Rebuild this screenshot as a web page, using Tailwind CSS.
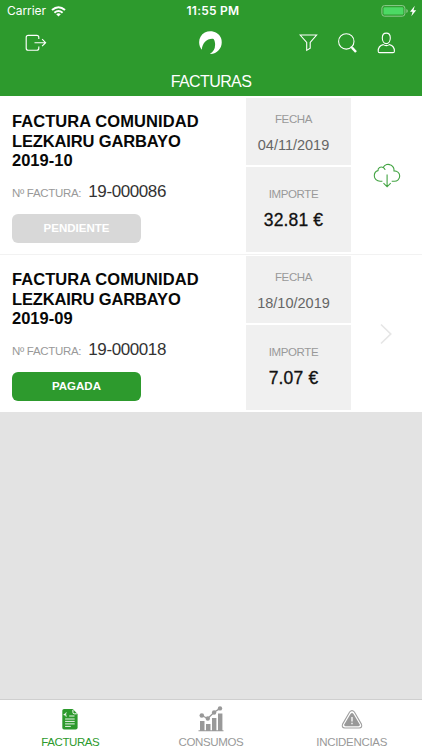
<!DOCTYPE html>
<html lang="es">
<head>
<meta charset="utf-8">
<title>Facturas</title>
<script src="https://cdn.jsdelivr.net/npm/@tailwindcss/browser@4"></script>
</head>
<body class="w-[422px] h-[750px] overflow-hidden bg-[#e3e3e3] font-['Liberation_Sans',Arial,sans-serif] flex flex-col whitespace-nowrap">
<header class="h-24 shrink-0 bg-[#2d9a2d] text-white flex flex-col">
  <div class="h-[22px] grid grid-cols-3 items-center pl-[7px] pr-[5px] font-[Inter,sans-serif]">
    <div class="flex items-center gap-[5px] text-[12px] leading-[22px]"><span class="tracking-[-0.05px]">Carrier</span>
      <svg class="w-[15px] h-[11px]" viewBox="0 0 15 11" fill="none" stroke="white" stroke-width="2"><path d="M1 4.1Q7.5-1.7 14 4.1M3.4 6.7Q7.5 3.2 11.6 6.7"/><path d="M5.2 8.2Q7.5 6.5 9.8 8.2L7.5 10.6Z" fill="white" stroke="none"/></svg>
    </div>
    <div class="text-center text-[12px] leading-[22px] font-semibold tracking-[0.25px] pl-[2px]">11:55 PM</div>
    <div class="flex justify-end items-center">
      <svg class="w-[38px] h-[12px]" viewBox="0 0 38 12"><rect x="2.9" y=".6" width="23" height="10.6" rx="2.6" fill="none" stroke="#8fca8f" stroke-width="1"/><rect x="4.5" y="2.2" width="19.9" height="7.4" rx="1.2" fill="#4cd964"/><path d="M27.4 4v4q1.4-.6 1.4-2t-1.4-2" fill="#8fca8f"/><path d="M35.8.8l-4.8 5.9h2.6l-1.3 4.5 4.9-6h-2.7z" fill="white"/></svg>
    </div>
  </div>
  <div class="h-[42px] grid grid-cols-3 items-center">
    <svg class="w-[22px] h-[18px] ml-[25px]" viewBox="0 0 22 18" fill="none" stroke="white" stroke-width="1.15"><path d="M13.8 5V3.3Q13.8 1.3 11.8 1.3H3.2Q1.2 1.3 1.2 3.3V14.2Q1.2 16.2 3.2 16.2H11.8Q13.8 16.2 13.8 14.2V12.5M9.5 8.7H20.5M17.1 5.2L20.6 8.7L17.1 12.2"/></svg>
    <svg class="w-[24px] h-[24px] justify-self-center" viewBox="0 0 24 24"><path d="M2.8 18.8C-1.6 13.5-.5 4.8 5.8 1.5C12.2-1.3 19.5 1.2 22 7C24.7 14.5 19.8 23.2 10.9 22.9Q16.8 19.2 16 12Q15.8 9.2 14.6 7.9C8.5 7 3.4 11.5 2.8 18.8Z" fill="white"/></svg>
    <div class="flex items-center pl-[18px] gap-[19.5px]">
      <svg class="w-[19px] h-[20px]" viewBox="0 0 19 20" fill="none" stroke="white" stroke-width="1.1"><path d="M1.1 2H17.6L11.2 9.4V15.3L7.7 17.4V9.4Z"/></svg>
      <svg class="w-[20px] h-[22px]" viewBox="0 0 20 22" fill="none" stroke="white"><circle cx="8.3" cy="9.4" r="7.7" stroke-width="1.05"/><path d="M12.8 14.6L14.5 15.9" stroke-width="1.2"/><path d="M14 15.6L18 20" stroke-width="2.4"/></svg>
      <svg class="w-[19px] h-[22px]" viewBox="0 0 19 22" fill="none" stroke="white" stroke-width="1.1"><path d="M9.3 1.1C6.5 1.1 5.3 3 5.3 6C5.3 9 7 11.6 9.3 11.6C11.6 11.6 13.3 9 13.3 6C13.3 3 12.1 1.1 9.3 1.1Z"/><path d="M6.2 12.6Q1 14 1.2 19.2Q1.2 20.6 2.6 20.6H16Q17.4 20.6 17.4 19.2Q17.6 14 12.4 12.6Q9.3 14.6 6.2 12.6Z"/></svg>
    </div>
  </div>
  <h1 class="h-8 text-center text-[16px] leading-[35px] tracking-[-0.6px]">FACTURAS</h1>
</header>

<main class="grow">
  <article class="h-[158px] bg-white flex">
    <div class="w-[246px] pl-[12px] pt-[16px]">
      <h2 class="text-[16.5px] leading-[19.5px] font-bold text-[#080808]"><span class="tracking-[0.07px]">FACTURA COMUNIDAD</span><br><span class="tracking-[-0.14px]">LEZKAIRU GARBAYO</span><br>2019-10</h2>
      <p class="mt-[11px] h-[20px] leading-[20px] flex items-baseline gap-[7px]"><span class="text-[11.5px] text-[#999] tracking-[-0.3px]">Nº FACTURA:</span><span class="text-[17px] text-[#333] tracking-[-0.4px]">19-000086</span></p>
      <div class="mt-[12px] w-[129px] h-[29px] rounded-[6px] bg-[#d8d8d8] text-white text-[11.5px] leading-[29px] font-bold text-center">PENDIENTE</div>
    </div>
    <div class="w-[105px] pt-[2px] flex flex-col gap-[2px] text-center">
      <div class="h-[67px] bg-[#f0f0f0] pt-[13px] pr-[10px]"><div class="text-[11.5px] leading-[16px] text-[#999] tracking-[-0.4px]">FECHA</div><div class="mt-[8px] text-[14.5px] leading-[20px] text-[#666]">04/11/2019</div></div>
      <div class="h-[85px] bg-[#f0f0f0] pt-[19px] pr-[10px]"><div class="text-[11.5px] leading-[16px] text-[#999] tracking-[-0.35px]">IMPORTE</div><div class="mt-[8px] text-[17.5px] leading-[20px] text-[#111] tracking-[0.15px] [-webkit-text-stroke:0.3px_#111]">32.81 €</div></div>
    </div>
    <div class="w-[71px] flex items-center justify-center">
      <svg class="w-[28px] h-[26px] relative top-[1px]" viewBox="0 0 28 26" fill="none" stroke="#43a443" stroke-width="1.1"><path d="M9.4 18.3H7.1C3.8 18.3 1.3 15.9 1.3 12.8C1.3 10.1 2.7 8.1 5 7.6C4.8 4.6 7.8 3.2 10.2 4.6C11.7 1.3 15.3.6 17.8 2.1C20.1 3.3 21.2 5.4 21 7.9C24.4 8 26.7 10.3 26.7 13.1C26.7 16.1 24.3 18.3 21.4 18.3H18.7M10.2 4.6Q11.8 5.4 12.1 7M14.1 11.5V23.7M10.5 20.2L14.1 23.8L17.7 20.2"/></svg>
    </div>
  </article>
  <article class="h-[158px] bg-white border-t border-[#f2f2f2] flex">
    <div class="w-[246px] pl-[12px] pt-[15px]">
      <h2 class="text-[16.5px] leading-[19.5px] font-bold text-[#080808]"><span class="tracking-[0.07px]">FACTURA COMUNIDAD</span><br><span class="tracking-[-0.14px]">LEZKAIRU GARBAYO</span><br>2019-09</h2>
      <p class="mt-[11px] h-[20px] leading-[20px] flex items-baseline gap-[7px]"><span class="text-[11.5px] text-[#999] tracking-[-0.3px]">Nº FACTURA:</span><span class="text-[17px] text-[#333] tracking-[-0.4px]">19-000018</span></p>
      <div class="mt-[12px] w-[129px] h-[29px] rounded-[6px] bg-[#2d9a2d] text-white text-[11.5px] leading-[29px] font-bold text-center">PAGADA</div>
    </div>
    <div class="w-[105px] pt-[1px] flex flex-col gap-[2px] text-center">
      <div class="h-[67px] bg-[#f0f0f0] pt-[13px] pr-[10px]"><div class="text-[11.5px] leading-[16px] text-[#999] tracking-[-0.4px]">FECHA</div><div class="mt-[8px] text-[14.5px] leading-[20px] text-[#666]">18/10/2019</div></div>
      <div class="h-[85px] bg-[#f0f0f0] pt-[19px] pr-[10px]"><div class="text-[11.5px] leading-[16px] text-[#999] tracking-[-0.35px]">IMPORTE</div><div class="mt-[8px] text-[17.5px] leading-[20px] text-[#111] tracking-[0.15px] [-webkit-text-stroke:0.3px_#111]">7.07 €</div></div>
    </div>
    <div class="w-[71px] flex items-center justify-center">
      <svg class="w-[12px] h-[22px] relative left-[-1px]" viewBox="0 0 12 22" fill="none" stroke="#e6e6e6" stroke-width="1.7"><path d="M1 1.5L10.7 11L1 20.5"/></svg>
    </div>
  </article>
</main>

<nav class="h-[51px] shrink-0 bg-white border-t border-[#cfcfcf] grid grid-cols-3 text-[11.5px] leading-[14px] text-[#999]">
  <div class="flex flex-col items-center text-[#2d9a2d] pt-[9px]">
    <svg class="w-[16px] h-[21px]" viewBox="0 0 16 21"><path d="M2 0H10.8L15.6 5V18.6Q15.6 20.5 13.7 20.5H2Q.3 20.5.3 18.6V1.8Q.3 0 2 0Z" fill="currentColor"/><path d="M10.9.8V3.3Q10.9 4.8 12.4 4.8H14.8" fill="none" stroke="white" stroke-width="1"/><path d="M4.7 3.8Q2.5 4.3 2.7 5.7Q3 7.4 4.9 7.1M1.6 5.6H4.2M7.2 7H12.5M3.1 10H12.7M3.1 12.4H12.7M3.1 14.9H12.7M3.1 17.4H8.8" fill="none" stroke="white" stroke-width=".9"/></svg>
    <span class="mt-[5px] tracking-[-0.4px]">FACTURAS</span>
  </div>
  <div class="flex flex-col items-center pt-[6px]">
    <svg class="w-[26px] h-[26px]" viewBox="0 0 26 26" fill="currentColor"><path d="M.5 24.2H25.5V25.2H.5ZM2 15H6.5V24.4H2ZM8 18H12.5V24.4H8ZM14 12H18.4V24.4H14ZM20 7.6H24.4V24.4H20Z"/><path d="M3.8 9.5L9.7 12.5L16.2 6.3L22 2.4" fill="none" stroke="currentColor" stroke-width="1.3"/><circle cx="3.8" cy="9.5" r="2.3"/><circle cx="9.8" cy="12.5" r="2.2"/><circle cx="16.1" cy="6.5" r="2.2"/><circle cx="22" cy="2.4" r="2.2"/></svg>
    <span class="mt-[3px] tracking-[-0.35px]">CONSUMOS</span>
  </div>
  <div class="flex flex-col items-center pt-[10px]">
    <svg class="w-[22px] h-[20px]" viewBox="0 0 22 20"><path d="M8.6 2Q11-.8 13.4 2L20.4 14.1Q21.7 17.7 18.2 18H3.8Q.3 17.7 1.6 14.1Z" fill="none" stroke="#a0a0a0" stroke-width="1.1"/><path d="M9.5 3.9Q11 1.9 12.5 3.9L18.6 14.3Q19.3 16.1 17.5 16.2H4.5Q2.7 16.1 3.4 14.3Z" fill="#999"/><path d="M11 7V11.5M11 12.8V14.2" stroke="white" stroke-width="1.3"/></svg>
    <span class="mt-[5px] tracking-[-0.3px]">INCIDENCIAS</span>
  </div>
</nav>
</body>
</html>
